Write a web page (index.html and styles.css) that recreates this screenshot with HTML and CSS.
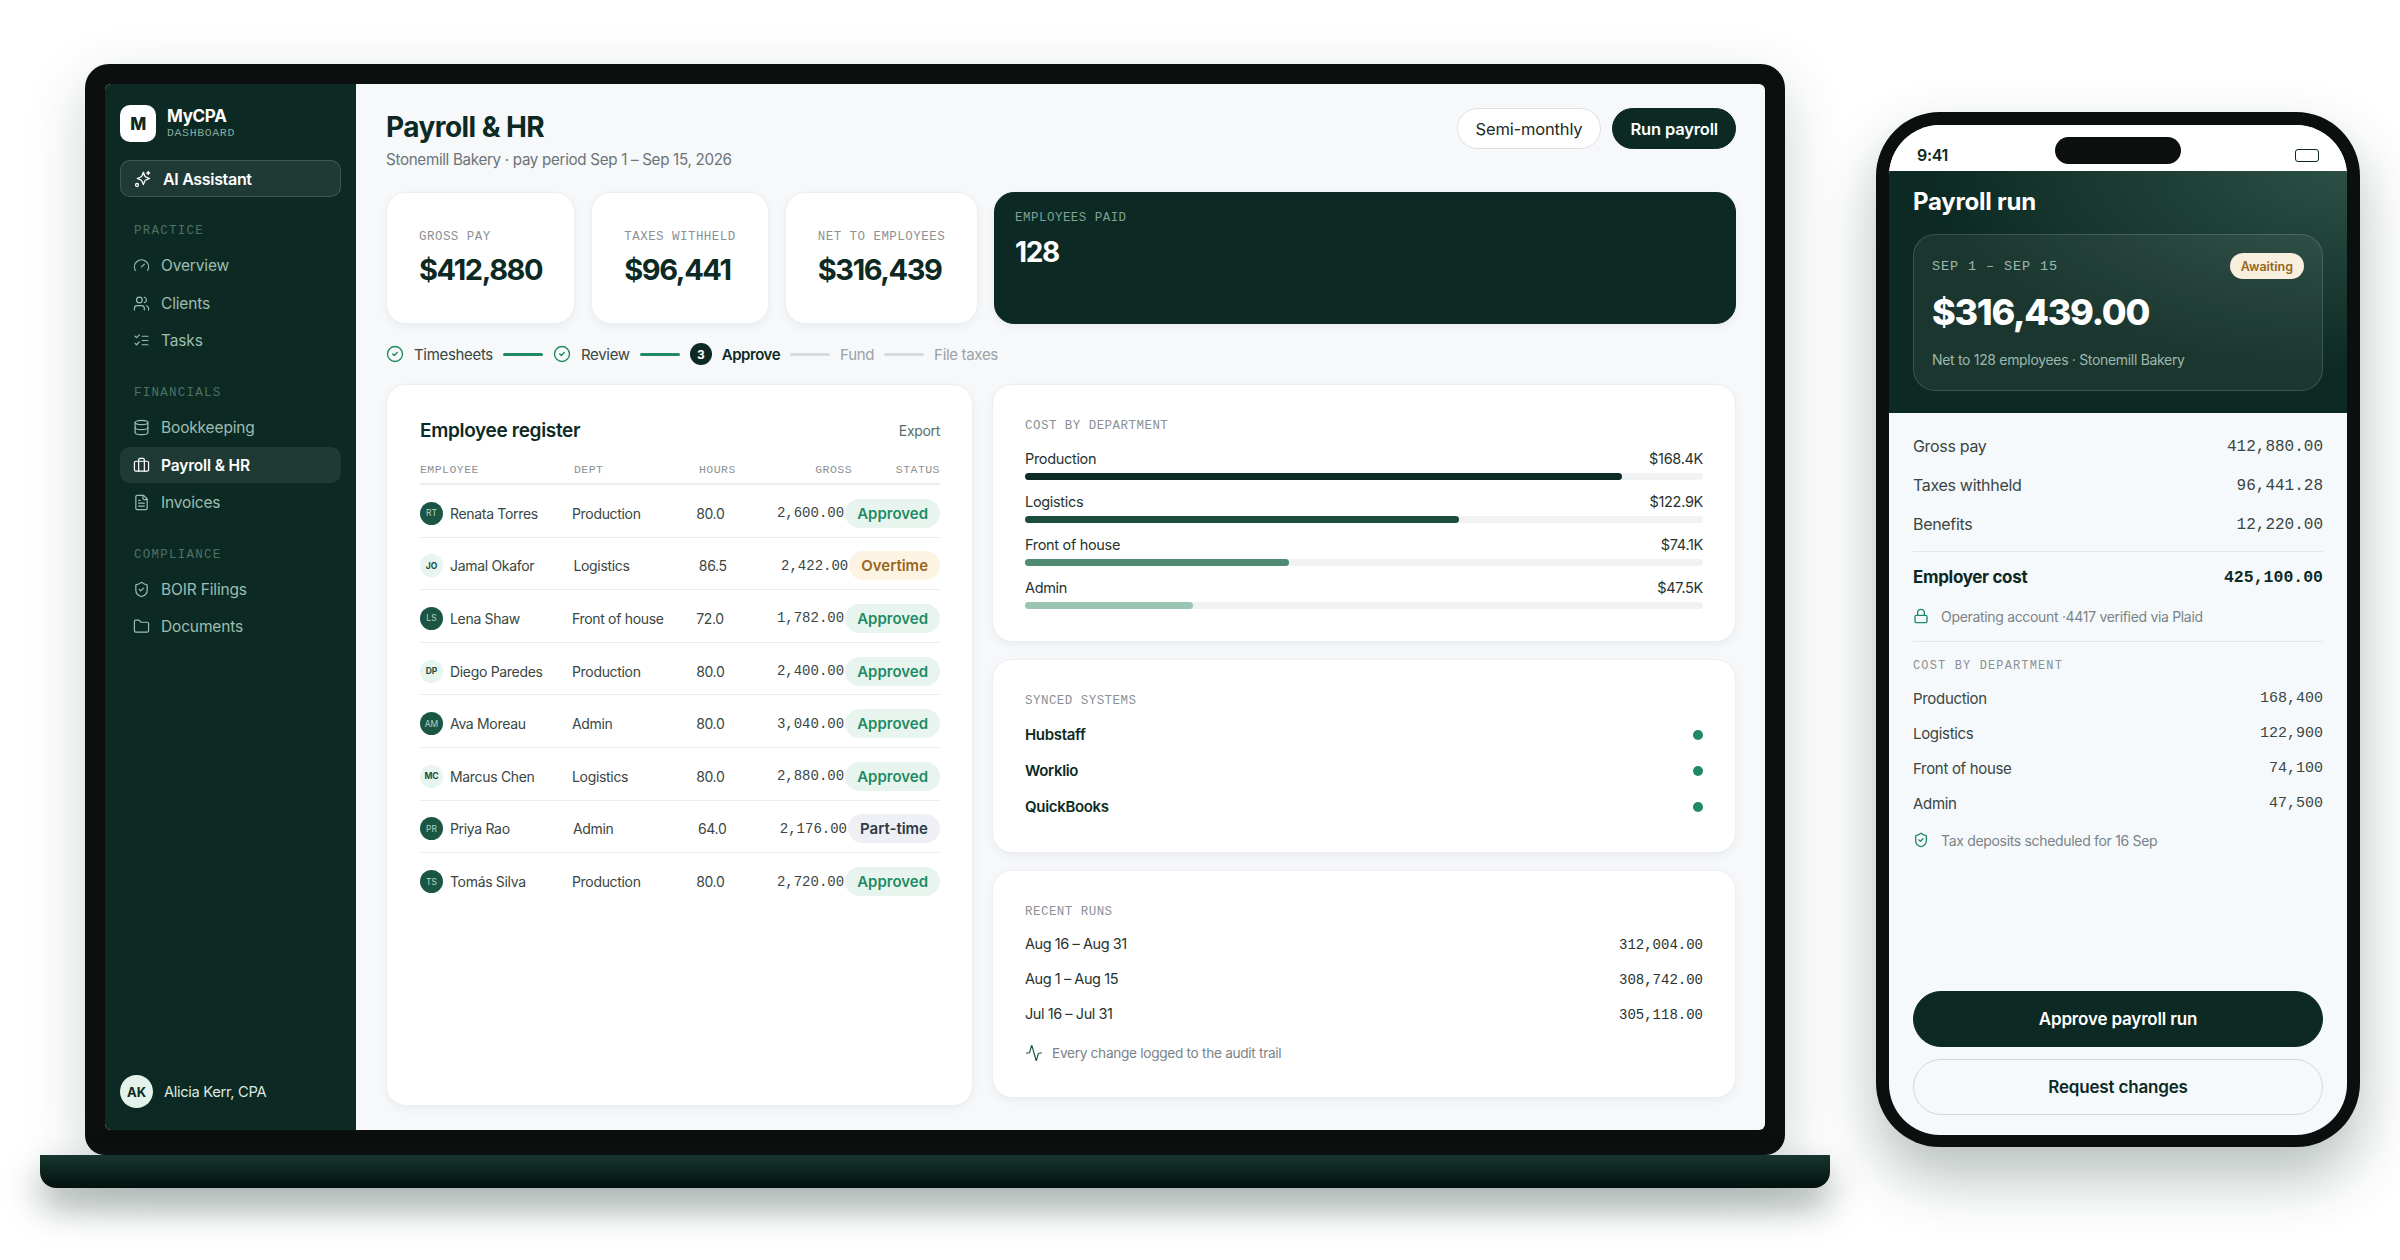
FILE: index.html
```html
<!DOCTYPE html>
<html lang="en">
<head>
  <meta charset="UTF-8" />
  <title>MyCPA Payroll</title>
  <link rel="stylesheet" href="styles.css">
</head>
<body>
  <!-- Shared icons -->
  <svg class="icon-defs" aria-hidden="true">
    <symbol id="i-sparkle" viewBox="0 0 24 24"><path d="M12.500 3l1.800 4.700a3 3 0 0 0 1.800 1.800l4.700 1.800-4.700 1.800a3 3 0 0 0-1.800 1.800l-1.800 4.600-1.800-4.600a3 3 0 0 0-1.800-1.800l-4.600-1.800 4.600-1.800a3 3 0 0 0 1.800-1.800z"/><path d="M19 2v4M17 4h4"/><circle cx="4" cy="20" r="2"/></symbol>
    <symbol id="i-gauge" viewBox="0 0 24 24"><path d="M12 14l4-4"/><path d="M3.340 19a10 10 0 1 1 17.320 0"/></symbol>
    <symbol id="i-users" viewBox="0 0 24 24"><path d="M16 21v-2a4 4 0 0 0-4-4H6a4 4 0 0 0-4 4v2"/><circle cx="9" cy="7" r="4"/><path d="M22 21v-2a4 4 0 0 0-3-3.870"/><path d="M16 3.130a4 4 0 0 1 0 7.750"/></symbol>
    <symbol id="i-tasks" viewBox="0 0 24 24"><path d="M13 6h8M13 12h8M13 18h8"/><path d="M3 6l2 2 4-4"/><path d="M3 16l2 2 4-4"/></symbol>
    <symbol id="i-database" viewBox="0 0 24 24"><ellipse cx="12" cy="5" rx="9" ry="3"/><path d="M3 5v14a9 3 0 0 0 18 0V5"/><path d="M3 12a9 3 0 0 0 18 0"/></symbol>
    <symbol id="i-briefcase" viewBox="0 0 24 24"><path d="M16 20V4a2 2 0 0 0-2-2h-4a2 2 0 0 0-2 2v16"/><rect x="2" y="6" width="20" height="14" rx="2"/></symbol>
    <symbol id="i-file" viewBox="0 0 24 24"><path d="M15 2H6a2 2 0 0 0-2 2v16a2 2 0 0 0 2 2h12a2 2 0 0 0 2-2V7z"/><path d="M14 2v4a2 2 0 0 0 2 2h4"/><path d="M10 9H8M16 13H8M16 17H8"/></symbol>
    <symbol id="i-shield" viewBox="0 0 24 24"><path d="M20 13c0 5-3.500 7.500-7.660 8.950a1 1 0 0 1-.670-.010C7.500 20.500 4 18 4 13V6a1 1 0 0 1 1-1c2 0 4.500-1.200 6.240-2.720a1.170 1.170 0 0 1 1.520 0C14.510 3.810 17 5 19 5a1 1 0 0 1 1 1z"/><path d="M9 12l2 2 4-4"/></symbol>
    <symbol id="i-folder" viewBox="0 0 24 24"><path d="M20 20a2 2 0 0 0 2-2V8a2 2 0 0 0-2-2h-7.900a2 2 0 0 1-1.690-.900L9.600 3.900A2 2 0 0 0 7.930 3H4a2 2 0 0 0-2 2v13a2 2 0 0 0 2 2z"/></symbol>
    <symbol id="i-check" viewBox="0 0 24 24"><circle cx="12" cy="12" r="10"/><path d="M9 12l2 2 4-4"/></symbol>
    <symbol id="i-activity" viewBox="0 0 24 24"><path d="M22 12h-2.480a2 2 0 0 0-1.930 1.460l-2.350 8.360a.25.25 0 0 1-.480 0L9.240 2.180a.25.25 0 0 0-.480 0l-2.350 8.360A2 2 0 0 1 4.490 12H2"/></symbol>
    <symbol id="i-lock" viewBox="0 0 24 24"><rect x="3" y="11" width="18" height="11" rx="2"/><path d="M7 11V7a5 5 0 0 1 10 0v4"/></symbol>
  </svg>

  <div class="stage">
    <!-- Laptop -->
    <div class="laptop">
      <div class="laptop-shell">
        <div class="screen">
          <aside class="sidebar">
            <div class="logo">
              <div class="logo-mark">M</div>
              <div>
                <div class="logo-name">MyCPA</div>
                <div class="logo-sub">DASHBOARD</div>
              </div>
            </div>
            <div class="ai-btn"><svg class="icon"><use href="#i-sparkle"/></svg>AI Assistant</div>

            <div class="nav-label">PRACTICE</div>
            <div class="nav-item"><svg class="icon"><use href="#i-gauge"/></svg>Overview</div>
            <div class="nav-item"><svg class="icon"><use href="#i-users"/></svg>Clients</div>
            <div class="nav-item"><svg class="icon"><use href="#i-tasks"/></svg>Tasks</div>

            <div class="nav-label">FINANCIALS</div>
            <div class="nav-item"><svg class="icon"><use href="#i-database"/></svg>Bookkeeping</div>
            <div class="nav-item active"><svg class="icon"><use href="#i-briefcase"/></svg>Payroll &amp; HR</div>
            <div class="nav-item"><svg class="icon"><use href="#i-file"/></svg>Invoices</div>

            <div class="nav-label">COMPLIANCE</div>
            <div class="nav-item"><svg class="icon"><use href="#i-shield"/></svg>BOIR Filings</div>
            <div class="nav-item"><svg class="icon"><use href="#i-folder"/></svg>Documents</div>

            <div class="user">
              <div class="user-avatar">AK</div>
              <span>Alicia Kerr, CPA</span>
            </div>
          </aside>

          <main class="main">
            <div class="page-head">
              <div>
                <h1 class="page-title">Payroll &amp; HR</h1>
                <p class="page-sub">Stonemill Bakery · pay period Sep 1 – Sep 15, 2026</p>
              </div>
              <div class="head-actions">
                <div class="pill-btn">Semi-monthly</div>
                <div class="pill-btn dark">Run payroll</div>
              </div>
            </div>

            <div class="kpis">
              <div class="kpi">
                <div class="mono-label">GROSS PAY</div>
                <div class="kpi-value">$412,880</div>
              </div>
              <div class="kpi">
                <div class="mono-label">TAXES WITHHELD</div>
                <div class="kpi-value">$96,441</div>
              </div>
              <div class="kpi">
                <div class="mono-label">NET TO EMPLOYEES</div>
                <div class="kpi-value">$316,439</div>
              </div>
              <div class="kpi kpi-dark">
                <div class="mono-label">EMPLOYEES PAID</div>
                <div class="kpi-value">128</div>
              </div>
            </div>

            <div class="steps">
              <svg class="step-icon"><use href="#i-check"/></svg><span class="step-name">Timesheets</span><i class="step-line done"></i>
              <svg class="step-icon"><use href="#i-check"/></svg><span class="step-name">Review</span><i class="step-line done"></i>
              <span class="step-num">3</span><span class="step-name current">Approve</span><i class="step-line"></i>
              <span class="step-name todo">Fund</span><i class="step-line"></i>
              <span class="step-name todo">File taxes</span>
            </div>

            <div class="panels">
              <section class="card register">
                <div class="register-head">
                  <h2>Employee register</h2>
                  <span class="export">Export</span>
                </div>
                <div class="reg-cols">
                  <span>EMPLOYEE</span><span>DEPT</span><span>HOURS</span><span class="right">GROSS</span><span class="right">STATUS</span>
                </div>
                <div class="reg-row">
                  <div class="emp"><span class="av">RT</span>Renata Torres</div><div>Production</div><div>80.0</div><div class="gross">2,600.00</div><span class="tag ok">Approved</span>
                </div>
                <div class="reg-row">
                  <div class="emp"><span class="av light">JO</span>Jamal Okafor</div><div>Logistics</div><div>86.5</div><div class="gross">2,422.00</div><span class="tag over">Overtime</span>
                </div>
                <div class="reg-row">
                  <div class="emp"><span class="av">LS</span>Lena Shaw</div><div>Front of house</div><div>72.0</div><div class="gross">1,782.00</div><span class="tag ok">Approved</span>
                </div>
                <div class="reg-row">
                  <div class="emp"><span class="av light">DP</span>Diego Paredes</div><div>Production</div><div>80.0</div><div class="gross">2,400.00</div><span class="tag ok">Approved</span>
                </div>
                <div class="reg-row">
                  <div class="emp"><span class="av">AM</span>Ava Moreau</div><div>Admin</div><div>80.0</div><div class="gross">3,040.00</div><span class="tag ok">Approved</span>
                </div>
                <div class="reg-row">
                  <div class="emp"><span class="av light">MC</span>Marcus Chen</div><div>Logistics</div><div>80.0</div><div class="gross">2,880.00</div><span class="tag ok">Approved</span>
                </div>
                <div class="reg-row">
                  <div class="emp"><span class="av">PR</span>Priya Rao</div><div>Admin</div><div>64.0</div><div class="gross">2,176.00</div><span class="tag part">Part-time</span>
                </div>
                <div class="reg-row">
                  <div class="emp"><span class="av">TS</span>Tomás Silva</div><div>Production</div><div>80.0</div><div class="gross">2,720.00</div><span class="tag ok">Approved</span>
                </div>
              </section>

              <div class="side-col">
                <section class="card">
                  <div class="mono-label">COST BY DEPARTMENT</div>
                  <div class="bars">
                    <div class="bar-row">
                      <div class="bar-text"><span>Production</span><span>$168.4K</span></div>
                      <div class="track"><div class="fill c1" style="width: 88%"></div></div>
                    </div>
                    <div class="bar-row">
                      <div class="bar-text"><span>Logistics</span><span>$122.9K</span></div>
                      <div class="track"><div class="fill c2" style="width: 64%"></div></div>
                    </div>
                    <div class="bar-row">
                      <div class="bar-text"><span>Front of house</span><span>$74.1K</span></div>
                      <div class="track"><div class="fill c3" style="width: 39%"></div></div>
                    </div>
                    <div class="bar-row">
                      <div class="bar-text"><span>Admin</span><span>$47.5K</span></div>
                      <div class="track"><div class="fill c4" style="width: 24.8%"></div></div>
                    </div>
                  </div>
                </section>

                <section class="card card-synced">
                  <div class="mono-label">SYNCED SYSTEMS</div>
                  <div class="synced">
                    <div class="sync-row">Hubstaff<i class="dot"></i></div>
                    <div class="sync-row">Worklio<i class="dot"></i></div>
                    <div class="sync-row">QuickBooks<i class="dot"></i></div>
                  </div>
                </section>

                <section class="card">
                  <div class="mono-label">RECENT RUNS</div>
                  <div class="runs">
                    <div class="run-row"><span class="run-name">Aug 16 – Aug 31</span><span class="mono">312,004.00</span></div>
                    <div class="run-row"><span class="run-name">Aug 1 – Aug 15</span><span class="mono">308,742.00</span></div>
                    <div class="run-row"><span class="run-name">Jul 16 – Jul 31</span><span class="mono">305,118.00</span></div>
                  </div>
                  <div class="audit"><svg class="audit-icon"><use href="#i-activity"/></svg>Every change logged to the audit trail</div>
                </section>
              </div>
            </div>
          </main>
        </div>
      </div>
      <div class="laptop-base"></div>
    </div>

    <!-- Phone -->
    <div class="phone">
      <div class="phone-screen">
        <div class="status-bar">
          <span class="time">9:41</span>
          <i class="island"></i>
          <i class="battery"></i>
        </div>
        <div class="run-head">
          <h2>Payroll run</h2>
          <div class="run-card">
            <div class="run-card-top">
              <span class="run-dates">SEP 1 – SEP 15</span>
              <span class="awaiting">Awaiting</span>
            </div>
            <div class="run-amount">$316,439.00</div>
            <div class="run-note">Net to 128 employees · Stonemill Bakery</div>
          </div>
        </div>
        <div class="run-body">
          <div class="sum-row"><span class="sum-name">Gross pay</span><span class="mono">412,880.00</span></div>
          <div class="sum-row"><span class="sum-name">Taxes withheld</span><span class="mono">96,441.28</span></div>
          <div class="sum-row"><span class="sum-name">Benefits</span><span class="mono">12,220.00</span></div>
          <div class="rule"></div>
          <div class="sum-total"><span>Employer cost</span><span class="mono">425,100.00</span></div>
          <div class="run-hint"><svg class="hint-icon"><use href="#i-lock"/></svg>Operating account ·4417 verified via Plaid</div>
          <div class="rule low"></div>
          <div class="mono-label phone-label">COST BY DEPARTMENT</div>
          <div class="dept-list">
            <div class="dept-row"><span>Production</span><span class="mono">168,400</span></div>
            <div class="dept-row"><span>Logistics</span><span class="mono">122,900</span></div>
            <div class="dept-row"><span>Front of house</span><span class="mono">74,100</span></div>
            <div class="dept-row"><span>Admin</span><span class="mono">47,500</span></div>
          </div>
          <div class="run-hint tight"><svg class="hint-icon"><use href="#i-shield"/></svg>Tax deposits scheduled for 16 Sep</div>
          <div class="run-actions">
            <div class="big-btn primary">Approve payroll run</div>
            <div class="big-btn">Request changes</div>
          </div>
        </div>
      </div>
    </div>
  </div>
</body>
</html>
```

FILE: styles.css
```css
* {
  margin: 0;
  padding: 0;
  box-sizing: border-box;
}

html, body {
  height: 100%;
}

body {
  background: #ffffff;
  color: #0c2a23;
  font-family: 'Inter', sans-serif;
  letter-spacing: -0.02em;
  overflow: hidden;
}

.icon-defs {
  position: absolute;
  width: 0;
  height: 0;
}

svg {
  fill: none;
  stroke: currentColor;
  stroke-width: 2;
  stroke-linecap: round;
  stroke-linejoin: round;
}

.mono, .gross, .mono-label, .logo-sub, .nav-label, .reg-cols, .run-dates {
  font-family: 'Liberation Mono', monospace;
  letter-spacing: 0;
}

.stage {
  display: flex;
  align-items: flex-start;
  gap: 46px;
  padding: 64px 0 0 40px;
}

/* Laptop */
.laptop {
  width: 1790px;
  display: flex;
  flex-direction: column;
  align-items: center;
  flex-shrink: 0;
}

.laptop-shell {
  width: 1700px;
  height: 1091px;
  padding: 20px 20px 25px;
  background: #0b100e;
  border-radius: 24px 24px 20px 20px;
  box-shadow: 0 20px 60px rgba(12, 42, 35, 0.2);
}

.laptop-base {
  width: 1790px;
  height: 33px;
  background: linear-gradient(180deg, #17362f 0%, #04110e 100%);
  border-radius: 0 0 16px 16px;
  box-shadow: 0 18px 36px rgba(12, 42, 35, 0.4);
}

.screen {
  display: flex;
  height: 100%;
  border-radius: 6px;
  overflow: hidden;
  background: #f6f8fa;
}

/* Sidebar */
.sidebar {
  width: 251px;
  flex-shrink: 0;
  background: #0c2a23;
  padding: 21px 15px 22px;
  display: flex;
  flex-direction: column;
}

.logo {
  display: flex;
  align-items: center;
  gap: 11px;
  height: 37px;
}

.logo-mark {
  width: 36px;
  height: 37px;
  background: #fff;
  border-radius: 10px;
  color: #0c2a23;
  font-weight: 800;
  font-size: 17px;
  display: flex;
  align-items: center;
  justify-content: center;
}

.logo-name {
  color: #fff;
  font-size: 17px;
  font-weight: 700;
  line-height: 19px;
}

.logo-sub {
  color: #8aa89c;
  font-size: 11.5px;
  letter-spacing: 0.65px;
  line-height: 14px;
}

.ai-btn {
  margin: 18px 0 1px;
  height: 37px;
  display: flex;
  align-items: center;
  gap: 11px;
  padding: 0 13px;
  border: 1px solid rgba(255, 255, 255, 0.14);
  border-radius: 10px;
  background: rgba(255, 255, 255, 0.08);
  color: #fff;
  font-size: 16px;
  font-weight: 600;
}

.ai-btn .icon {
  width: 18px;
  height: 18px;
}

.icon {
  width: 17px;
  height: 17px;
  flex-shrink: 0;
  stroke-width: 1.7;
}

.nav-label {
  margin: 23px 0 6px 14px;
  height: 20px;
  line-height: 20px;
  color: #4f7165;
  font-size: 12.5px;
  letter-spacing: 1.25px;
}

.nav-item {
  height: 37.6px;
  display: flex;
  align-items: center;
  gap: 11px;
  padding: 0 13px;
  color: #9cbdb0;
  font-size: 15.5px;
  letter-spacing: -0.01em;
  border-radius: 10px;
}

.nav-item.active {
  height: 35.6px;
  margin: 1px 0;
  background: rgba(255, 255, 255, 0.08);
  color: #fff;
  font-weight: 600;
}

.user {
  margin-top: auto;
  display: flex;
  align-items: center;
  gap: 11px;
  color: #dbe8e2;
  font-size: 14.7px;
}

.user-avatar {
  width: 33px;
  height: 33px;
  border-radius: 50%;
  background: #e3f2ea;
  color: #0c2a23;
  font-size: 13px;
  font-weight: 700;
  letter-spacing: 0;
  display: flex;
  align-items: center;
  justify-content: center;
}

/* Main */
.main {
  flex: 1;
  padding: 24px 29px 0 30px;
  min-width: 0;
}

.page-head {
  display: flex;
  justify-content: space-between;
  align-items: flex-start;
  height: 84px;
}

.page-title {
  font-size: 28px;
  line-height: 38px;
  font-weight: 700;
  letter-spacing: -0.02em;
}

.page-sub {
  margin-top: 4px;
  font-size: 15.2px;
  line-height: 20px;
  color: #6b7478;
}

.head-actions {
  display: flex;
  gap: 11px;
}

.pill-btn {
  height: 41px;
  padding: 0 18px;
  display: flex;
  align-items: center;
  border: 1.5px solid #dcdfe3;
  border-radius: 21px;
  background: #fff;
  color: #1c2b27;
  font-size: 16.5px;
  letter-spacing: -0.01em;
}

.pill-btn.dark {
  padding: 0 17px;
  background: #0c2a23;
  border-color: #0c2a23;
  color: #fff;
  font-weight: 600;
}

.kpis {
  display: flex;
  gap: 16px;
  height: 132px;
}

.kpi {
  padding: 34px 32px 30px;
  background: #fff;
  border: 1px solid #eceef1;
  border-radius: 20px;
  box-shadow: 0 3px 10px rgba(12, 42, 35, 0.05);
}

.mono-label {
  color: #8b9196;
  font-size: 12.5px;
  line-height: 18px;
  letter-spacing: 0.46px;
  white-space: nowrap;
}

.kpi .mono-label {
  line-height: 20px;
}

.kpi-value {
  margin-top: 5px;
  font-size: 29px;
  line-height: 36px;
  font-weight: 700;
  letter-spacing: -1.4px;
  color: #0c2a23;
}

.kpi-dark {
  flex: 1;
  padding: 15px 20px;
  background: #0c2a23;
  border-color: #0c2a23;
}

.kpi-dark .mono-label {
  color: #7ea193;
}

.kpi-dark .kpi-value {
  margin-top: 6px;
  color: #fff;
  font-size: 28px;
}

.steps {
  display: flex;
  align-items: center;
  gap: 10px;
  height: 24px;
  margin-top: 18px;
  font-size: 15px;
  color: #3a4643;
}

.step-icon {
  width: 18px;
  height: 18px;
  color: #1f8a63;
  stroke-width: 1.8;
}

.step-name.current {
  font-weight: 600;
  color: #0c2a23;
  letter-spacing: -0.03em;
}

.step-name.todo {
  color: #9aa2a8;
}

.step-line {
  width: 40px;
  height: 3px;
  border-radius: 2px;
  background: #d5d9e0;
}

.step-line.done {
  background: #1f8a63;
}

.step-num {
  width: 22px;
  height: 22px;
  border-radius: 50%;
  background: #0c2a23;
  color: #fff;
  font-size: 12px;
  font-weight: 700;
  display: flex;
  align-items: center;
  justify-content: center;
}

.panels {
  display: grid;
  grid-template-columns: 587px 744px;
  gap: 19px;
  align-items: start;
  margin-top: 18px;
}

.card {
  padding: 32px;
  background: #fff;
  border: 1px solid #eceef1;
  border-radius: 20px;
  box-shadow: 0 3px 10px rgba(12, 42, 35, 0.05);
}

/* Employee register */
.register {
  height: 722px;
  padding: 31px 32px 32px 33px;
}

.register-head {
  display: flex;
  justify-content: space-between;
  align-items: center;
  height: 28px;
}

.register-head h2 {
  font-size: 19px;
  font-weight: 600;
}

.export {
  font-size: 14px;
  color: #567068;
}

.reg-cols {
  display: grid;
  grid-template-columns: 154px 125px 116px 37px 1fr;
  height: 25px;
  margin-top: 16px;
  border-bottom: 2px solid #eceef1;
  color: #8b9196;
  font-size: 11.5px;
  letter-spacing: 0.47px;
  line-height: 20px;
}

.reg-cols .right {
  text-align: right;
}

.reg-row {
  display: grid;
  grid-template-columns: 1.53fr 1.25fr 0.74fr 0.76fr auto;
  align-items: center;
  height: 52.6px;
  padding-top: 5px;
  border-bottom: 1.5px solid #eceef1;
  font-size: 14px;
  color: #3a4643;
}

.reg-row:last-child {
  border-bottom: none;
}

.emp {
  display: flex;
  align-items: center;
  gap: 7px;
}

.av {
  width: 23px;
  height: 23px;
  border-radius: 50%;
  background: #1a5643;
  color: #b5d3c6;
  font-size: 8.5px;
  letter-spacing: 0;
  display: flex;
  align-items: center;
  justify-content: center;
}

.av.light {
  background: #e8f5ef;
  color: #15503e;
  font-weight: 700;
}

.gross {
  text-align: right;
  padding-right: 1px;
  font-size: 14px;
  color: #3a4643;
}

.tag {
  height: 29px;
  padding: 0 12px;
  display: flex;
  align-items: center;
  border-radius: 15px;
  font-size: 15px;
  font-weight: 600;
  letter-spacing: 0;
}

.tag.ok {
  background: #e8f5ef;
  color: #1f8a63;
}

.tag.over {
  background: #fdf3e3;
  color: #97661c;
}

.tag.part {
  background: #eef0f5;
  color: #2f3b44;
}

/* Right column */
.side-col {
  display: flex;
  flex-direction: column;
  gap: 17px;
}

.bars {
  display: flex;
  flex-direction: column;
  gap: 12px;
  margin-top: 14px;
}

.bar-text {
  display: flex;
  justify-content: space-between;
  height: 20px;
  line-height: 20px;
  font-size: 14.5px;
  color: #27332f;
}

.track {
  margin-top: 4px;
  height: 7px;
  border-radius: 4px;
  background: #f0f2f4;
}

.fill {
  height: 100%;
  border-radius: 4px;
}

.c1 { background: #0e2b25; }
.c2 { background: #1a4d3e; }
.c3 { background: #4f8a72; }
.c4 { background: #9cc4b2; }

.card-synced {
  padding-bottom: 33px;
}

.synced {
  display: flex;
  flex-direction: column;
  gap: 12px;
  margin-top: 13px;
}

.sync-row {
  display: flex;
  justify-content: space-between;
  align-items: center;
  height: 24px;
  padding-bottom: 2px;
  font-size: 15px;
  font-weight: 600;
  color: #0c2a23;
}

.dot {
  width: 10px;
  height: 10px;
  margin-top: 2px;
  border-radius: 50%;
  background: #1f8a63;
}

.runs {
  display: flex;
  flex-direction: column;
  gap: 11px;
  margin-top: 12px;
}

.run-row {
  display: flex;
  justify-content: space-between;
  align-items: center;
  height: 24px;
  font-size: 14.5px;
  letter-spacing: -0.03em;
  color: #27332f;
}

.run-name {
  padding-bottom: 3px;
}

.run-row .mono {
  font-size: 14px;
  letter-spacing: 0;
}

.audit {
  margin-top: 14px;
  height: 24px;
  display: flex;
  align-items: center;
  gap: 9px;
  font-size: 13.7px;
  color: #7a8388;
}

.audit-icon {
  width: 18px;
  height: 18px;
  color: #1a5643;
  stroke-width: 1.6;
}

/* Phone */
.phone {
  width: 484px;
  height: 1035px;
  margin-top: 48px;
  padding: 13px 13px 12px;
  flex-shrink: 0;
  background: #0b100e;
  border-radius: 64px;
  box-shadow: 0 30px 60px rgba(12, 42, 35, 0.3);
}

.phone-screen {
  position: relative;
  display: flex;
  flex-direction: column;
  height: 100%;
  border-radius: 51px;
  overflow: hidden;
  background: #f6f9fb;
}

.status-bar {
  position: relative;
  height: 46px;
  flex-shrink: 0;
  background: #fff;
}

.time {
  position: absolute;
  left: 28px;
  top: 19px;
  font-size: 16px;
  font-weight: 600;
  line-height: 22px;
  color: #0c2a23;
}

.island {
  position: absolute;
  left: 166px;
  top: 12px;
  width: 126px;
  height: 27px;
  border-radius: 14px;
  background: #0b100e;
}

.battery {
  position: absolute;
  right: 28px;
  top: 24px;
  width: 24px;
  height: 13px;
  border: 1.5px solid #0c2a23;
  border-radius: 3px;
}

.run-head {
  height: 242px;
  flex-shrink: 0;
  padding: 16px 24px 0;
  background:
    radial-gradient(420px 200px at 100% 0%, rgba(70, 110, 98, 0.55), rgba(70, 110, 98, 0) 100%),
    #0c2a23;
}

.run-head h2 {
  color: #fff;
  font-size: 24px;
  line-height: 30px;
  font-weight: 700;
  letter-spacing: -0.01em;
}

.run-card {
  margin-top: 17px;
  height: 157px;
  padding: 18px;
  border: 1px solid rgba(255, 255, 255, 0.15);
  border-radius: 22px;
  background: rgba(255, 255, 255, 0.06);
}

.run-card-top {
  display: flex;
  justify-content: space-between;
  align-items: center;
  height: 26px;
}

.run-dates {
  color: #9db9ad;
  font-size: 13.5px;
  letter-spacing: 0.9px;
}

.awaiting {
  height: 26px;
  padding: 0 11px;
  display: flex;
  align-items: center;
  border-radius: 13px;
  background: #f9efdf;
  color: #96661c;
  font-size: 12.5px;
  font-weight: 600;
  letter-spacing: 0;
}

.run-amount {
  margin-top: 9px;
  color: #fff;
  font-size: 36px;
  line-height: 48px;
  font-weight: 800;
  letter-spacing: -1.3px;
}

.run-note {
  margin-top: 14px;
  color: #9db9ad;
  font-size: 14px;
  line-height: 20px;
}

.run-body {
  flex: 1;
  display: flex;
  flex-direction: column;
  padding: 14px 24px 20px;
}

.sum-row {
  display: flex;
  justify-content: space-between;
  align-items: center;
  height: 39px;
  font-size: 16px;
  color: #3a4643;
}

.sum-name {
  padding-bottom: 2px;
}

.sum-row .mono {
  font-size: 16px;
}

.rule {
  margin-top: 7px;
  height: 1px;
  flex-shrink: 0;
  background: #e4e7ea;
}

.rule.low {
  margin-top: 13px;
}

.sum-total {
  margin-top: 7px;
  display: flex;
  justify-content: space-between;
  align-items: center;
  height: 36px;
  font-size: 17px;
  font-weight: 700;
  color: #0c2a23;
}

.sum-total .mono {
  font-size: 16.5px;
}

.run-hint {
  margin-top: 9px;
  height: 24px;
  display: flex;
  align-items: center;
  gap: 12px;
  font-size: 14px;
  color: #7a8388;
}

.run-hint.tight {
  margin-top: 7px;
}

.hint-icon {
  width: 16px;
  height: 16px;
  color: #1f8a63;
  flex-shrink: 0;
}

.phone-label {
  margin-top: 15px;
  font-size: 12px;
  letter-spacing: 1.13px;
}

.dept-list {
  margin-top: 6px;
}

.dept-row {
  display: flex;
  justify-content: space-between;
  align-items: center;
  height: 35px;
  font-size: 15px;
  color: #3a4643;
}

.dept-row .mono {
  font-size: 15px;
}

.run-actions {
  margin-top: auto;
  display: flex;
  flex-direction: column;
  gap: 12px;
}

.big-btn {
  height: 56px;
  display: flex;
  align-items: center;
  justify-content: center;
  border: 1px solid #d3d6da;
  border-radius: 28px;
  font-size: 17px;
  letter-spacing: -0.01em;
  font-weight: 600;
  color: #0c2a23;
}

.big-btn.primary {
  background: #0c2a23;
  border-color: #0c2a23;
  color: #fff;
}
```
